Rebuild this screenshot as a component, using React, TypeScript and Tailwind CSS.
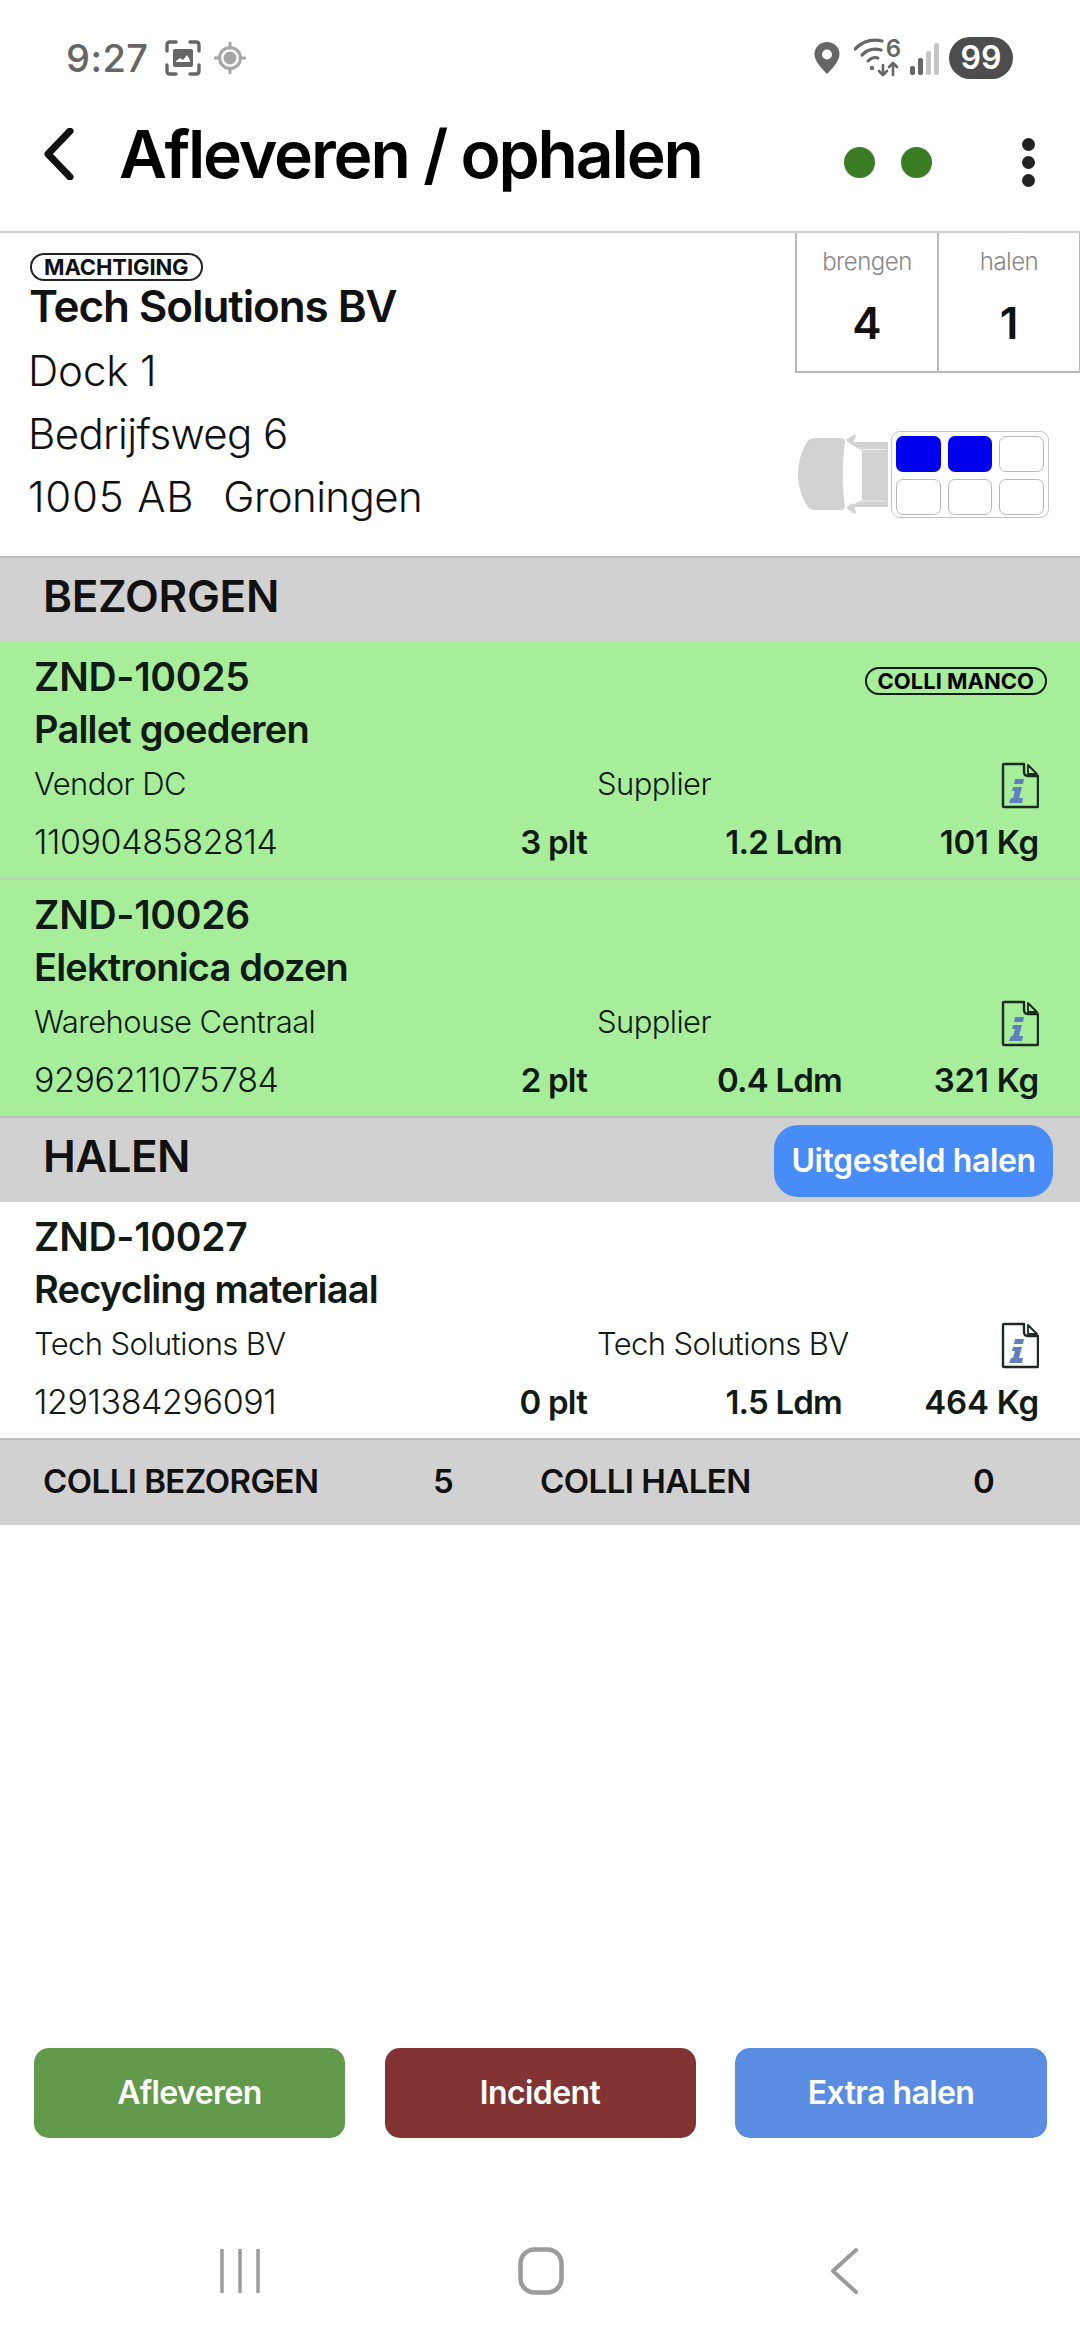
const InfoDoc = () => (
  <svg width="38" height="47" viewBox="0 0 38 47" className="mt-[4px] block" fill="none">
    <path d="M23 2H3q-1 0-1 1v41q0 1 1 1h33q1 0 1-1V14H27q-4 0-4-4V2z" stroke="#1c2a22" strokeWidth="2.4" strokeLinejoin="round" />
    <path d="M27 3l9 9h-9V3z" stroke="#1c2a22" strokeWidth="1.800" strokeLinejoin="round" />
    <path d="M14 17h9l-1 5h-9l1-5z" fill="#5f7fbf" />
    <path d="M12 25h9l-3 11h4l-1 5H8l2-5h2l2-7h-3l1-4z" fill="#5f7fbf" />
  </svg>
)

const Truck = () => (
  <svg width="93" height="87" viewBox="0 0 93 87" className="block" fill="#d2d2d2">
    <path d="M18 7h24c3 0 5 2 5 4-3 20-3 46 0 64 0 2-2 4-5 4H18c-4 0-7-1-9-4C3 65 0 54 0 43s3-22 9-32c2-3 5-4 9-4z" />
    <path d="M48 9l9-6 1 2-4 9z" />
    <path d="M48 77l9 6 1-2-4-9z" />
    <path d="M50 11h40v65H50l14-7V20z" />
    <path d="M62 18.500h26M62 70h26" stroke="#efefef" strokeWidth="1" fill="none" />
  </svg>
)

function Slot({ filled }: { filled?: boolean }) {
  return filled ? (
    <div className="h-[36px] rounded-[7px] bg-[#0000ee]"></div>
  ) : (
    <div className="h-[36px] rounded-[7px] border border-[#b9b9b9] bg-white"></div>
  )
}

const Shipment = ({ id, name, from, to, code, plt, ldm, kg, badge, green }: {
  id: string; name: string; from: string; to: string; code: string; plt: string; ldm: string; kg: string; badge?: string; green?: boolean
}) => (
  <div className={`h-[236px] pl-[34px] pr-[41px] pt-[11px] text-[#111a14] ${green ? "bg-[#a7ee9b]" : "bg-white"}`}>
    <div className="flex h-[46px] items-center justify-between">
      <div className="text-[39px] font-semibold leading-none tracking-[-0.3px]">{id}</div>
      {badge && <div className="mr-[-8px] mt-[9px] rounded-full border-[2.5px] border-[#0a1a0c] px-[11px] text-[22px] font-bold leading-[24px] tracking-[0px] text-black">{badge}</div>}
    </div>
    <div className="mt-[7px] flex h-[46px] items-center text-[38px] font-semibold leading-none tracking-[-0.8px]">{name}</div>
    <div className="mt-[8px] flex h-[46px] items-center text-[31px] font-light leading-none tracking-[-0.6px]">
      <div className="w-[563px]">{from}</div>
      <div className="flex-1">{to}</div>
      <InfoDoc />
    </div>
    <div className="mt-[12px] flex h-[48px] items-center text-[33px] leading-none">
      <div className="w-[400px] text-[34px] font-light tracking-[-0.4px]">{code}</div>
      <div className="w-[153px] text-right font-semibold tracking-[-0.8px]">{plt}</div>
      <div className="w-[255px] text-right font-semibold tracking-[-0.8px]">{ldm}</div>
      <div className="flex-1 text-right font-semibold tracking-[-0.2px]">{kg}</div>
    </div>
  </div>
)

export default function App() {
  return (
    <div className="flex h-[2340px] w-[1080px] flex-col overflow-hidden bg-white font-['Inter',sans-serif] text-[#111]">
      {/* status bar */}
      <div className="flex h-[116px] items-center pl-[66px] pr-[67px]">
        <span className="text-[38px] font-medium leading-none tracking-[0.5px] text-[#666]">9:27</span>
        <svg width="36" height="36" viewBox="0 0 36 36" className="ml-[16px]" fill="none">
          <path d="M2 11V5q0-3 3-3h6M25 2h6q3 0 3 3v6M34 25v6q0 3-3 3h-6M11 34H5q-3 0-3-3v-6" stroke="#666" strokeWidth="3.4" strokeLinecap="round" />
          <path d="M10 9h16q2 0 2 2v14q0 2-2 2H10q-2 0-2-2V11q0-2 2-2z" fill="#666" />
          <path d="M11 21l4-3 3 2 4-5 3 5v2H11z" fill="#fff" />
        </svg>
        <svg width="32" height="32" viewBox="0 0 32 32" className="ml-[13px]" fill="none">
          <circle cx="16" cy="16" r="10.5" stroke="#a6a6a6" strokeWidth="3" />
          <circle cx="16" cy="16" r="6.5" fill="#a6a6a6" />
          <path d="M16 1v5M16 26v5M1 16h5M26 16h5" stroke="#a6a6a6" strokeWidth="3" strokeLinecap="round" />
        </svg>
        <svg width="26" height="32" viewBox="0 0 26 32" className="ml-auto" fill="#666">
          <path fillRule="evenodd" d="M13 0c7 0 12.500 5 12.500 12 0 7-6 13-12.500 20C6.500 25 .5 19 .5 12 .5 5 6 0 13 0zm0 7.500a5 5 0 100 10 5 5 0 000-10z" />
        </svg>
        <svg width="46" height="40" viewBox="0 0 46 40" className="ml-[14px]" fill="none">
          <path d="M1 11C9 3 19 1 28 3" stroke="#666" strokeWidth="3.2" strokeLinecap="round" />
          <path d="M8 17c5-5 12-7 19-5" stroke="#666" strokeWidth="3.2" strokeLinecap="round" />
          <path d="M14 23c3-3 7-4 10-3" stroke="#666" strokeWidth="3" strokeLinecap="round" />
          <circle cx="18" cy="30" r="2.2" fill="#666" />
          <path d="M29 27v10M25 33l4 4 4-4M39 37V25M35 29l4-4 4 4" stroke="#666" strokeWidth="2.6" strokeLinecap="round" strokeLinejoin="round" />
        </svg>
        <span className="ml-[-14px] mt-[-18px] text-[24px] font-semibold leading-none text-[#666]">6</span>
        <svg width="30" height="32" viewBox="0 0 30 32" className="ml-[9px] mt-[2px]" fill="none">
          <rect x="0" y="23" width="5" height="9" rx="2" fill="#666" />
          <rect x="8" y="15" width="5" height="17" rx="2" fill="#666" />
          <rect x="16" y="8" width="5" height="24" rx="2" fill="#c4c4c4" />
          <rect x="24" y="0" width="5" height="32" rx="2" fill="#c4c4c4" />
        </svg>
        <span className="ml-[9px] flex h-[42px] w-[64px] items-center justify-center rounded-full bg-[#4d4d4d] text-[32px] font-semibold leading-none text-white">99</span>
      </div>

      {/* header */}
      <div className="flex h-[117px] items-center border-b-[2px] border-[#cfcfcf] pb-[39px]">
        <svg width="40" height="52" viewBox="0 0 40 52" className="ml-[40px]" fill="none">
          <path d="M30 3L8 26l22 23" stroke="#111" strokeWidth="7" strokeLinecap="round" strokeLinejoin="round" />
        </svg>
        <h1 className="ml-[39px] text-[66px] font-semibold leading-none tracking-[-2.15px] text-black">Afleveren / ophalen</h1>
        <div className="ml-auto mr-[90px] mt-[16px] flex items-center gap-[26px]">
          <span className="h-[31px] w-[31px] rounded-full bg-[#3a7d25]"></span>
          <span className="h-[31px] w-[31px] rounded-full bg-[#3a7d25]"></span>
        </div>
        <div className="mr-[45px] mt-[16px] flex flex-col gap-[5px]">
          <span className="h-[13px] w-[13px] rounded-full bg-[#222]"></span>
          <span className="h-[13px] w-[13px] rounded-full bg-[#222]"></span>
          <span className="h-[13px] w-[13px] rounded-full bg-[#222]"></span>
        </div>
      </div>

      {/* address + counters */}
      <div className="flex h-[323px] justify-between">
        <div className="pl-[29px] pt-[20px]">
          <span className="ml-[1px] inline-block rounded-full border-[2px] border-[#222] px-[12px] text-[22px] font-bold leading-[24px] tracking-[-0.1px] text-[#111]">MACHTIGING</span>
          <div className="text-[44px] font-semibold leading-[50px] tracking-[-1.1px]">Tech Solutions BV</div>
          <div className="ml-[-1px] mt-[8px] text-[42px] font-light leading-[63px] tracking-[-0.1px]">Dock 1</div>
          <div className="ml-[-1px] text-[42px] font-light leading-[63px] tracking-[-0.6px]">Bedrijfsweg 6</div>
          <div className="ml-[-1px] flex gap-[29px] text-[42px] font-light leading-[63px]">
            <span className="tracking-[0.8px]">1005 AB</span>
            <span className="tracking-[-0.6px]">Groningen</span>
          </div>
        </div>
        <div className="flex w-[285px] flex-col">
          <div className="flex h-[140px] border-b-[2px] border-l-[2px] border-r-[1px] border-[#b9b9b9]">
            <div className="flex w-[142px] flex-col items-center border-r-[2px] border-[#b9b9b9] pt-[14px]">
              <span className="text-[24px] font-light leading-[30px] tracking-[-0.5px] text-[#888]">brengen</span>
              <span className="mt-[21px] text-[44px] font-semibold leading-[50px]">4</span>
            </div>
            <div className="flex flex-1 flex-col items-center pt-[14px]">
              <span className="text-[24px] font-light leading-[30px] tracking-[-0.5px] text-[#888]">halen</span>
              <span className="mt-[21px] text-[44px] font-semibold leading-[50px]">1</span>
            </div>
          </div>
          <div className="ml-[3px] mt-[58px] flex items-center">
            <Truck />
            <div className="grid h-[87px] w-[158px] grid-cols-3 gap-x-[7px] gap-y-[7px] rounded-[9px] border border-[#c4c4c4] px-[4px] py-[4px]">
              <Slot filled />
              <Slot filled />
              <Slot />
              <Slot />
              <Slot />
              <Slot />
            </div>
          </div>
        </div>
      </div>

      {/* bezorgen */}
      <div className="flex h-[86px] items-center border-t-[2px] border-[#bdbdbd] bg-[#d1d1d1] pb-[8px] pl-[43px] text-[44px] font-semibold leading-none tracking-[-0.3px]">BEZORGEN</div>
      <Shipment green id="ZND-10025" name="Pallet goederen" from="Vendor DC" to="Supplier" code="1109048582814" plt="3 plt" ldm="1.2 Ldm" kg="101 Kg" badge="COLLI MANCO" />
      <div className="h-[2px] bg-[#b8d4b0]"></div>
      <Shipment green id="ZND-10026" name="Elektronica dozen" from="Warehouse Centraal" to="Supplier" code="9296211075784" plt="2 plt" ldm="0.4 Ldm" kg="321 Kg" />

      {/* halen */}
      <div className="flex h-[86px] items-center justify-between border-t-[2px] border-[#bdbdbd] bg-[#d1d1d1] pl-[43px] pr-[27px] pt-[2px]">
        <span className="mt-[-10px] text-[44px] font-semibold leading-none tracking-[-0.6px]">HALEN</span>
        <span className="flex h-[72px] w-[279px] items-center justify-center rounded-[24px] bg-[#478cf7] text-[32px] font-semibold leading-none tracking-[-0.4px] text-white">Uitgesteld halen</span>
      </div>
      <Shipment id="ZND-10027" name="Recycling materiaal" from="Tech Solutions BV" to="Tech Solutions BV" code="1291384296091" plt="0 plt" ldm="1.5 Ldm" kg="464 Kg" />

      {/* totals */}
      <div className="flex h-[87px] items-center border-t-[2px] border-[#bdbdbd] bg-[#d1d1d1] pb-[2px] pl-[43px] text-[33px] font-semibold leading-none tracking-[-0.55px]">
        <span className="w-[390px]">COLLI BEZORGEN</span>
        <span className="w-[107px]">5</span>
        <span className="w-[433px]">COLLI HALEN</span>
        <span>0</span>
      </div>

      {/* actions */}
      <div className="mt-auto flex justify-between pl-[34px] pr-[33px]">
        <button className="h-[90px] w-[311px] rounded-[15px] bg-[#62994a] text-[32px] font-semibold tracking-[-0.6px] text-white">Afleveren</button>
        <button className="h-[90px] w-[311px] rounded-[15px] bg-[#823432] text-[32px] font-semibold tracking-[-0.6px] text-white">Incident</button>
        <button className="h-[90px] w-[312px] rounded-[15px] bg-[#5a8de2] text-[32px] font-semibold tracking-[-0.6px] text-white">Extra halen</button>
      </div>

      {/* android nav */}
      <div className="mb-[46px] mt-[109px] flex h-[47px] items-center pl-[218px]">
        <svg width="44" height="44" viewBox="0 0 44 44" fill="none">
          <path d="M4 1v42M22 1v42M40 1v42" stroke="#9b9b9b" strokeWidth="3.4" strokeLinecap="round" />
        </svg>
        <svg width="46" height="48" viewBox="0 0 46 48" className="ml-[256px]" fill="none">
          <rect x="2.500" y="2.500" width="41" height="43" rx="14" stroke="#9b9b9b" strokeWidth="4.500" />
        </svg>
        <svg width="30" height="48" viewBox="0 0 30 48" className="ml-[265px]" fill="none">
          <path d="M27 3L4 24l23 21" stroke="#9b9b9b" strokeWidth="4" strokeLinecap="round" strokeLinejoin="round" />
        </svg>
      </div>
    </div>
  )
}
